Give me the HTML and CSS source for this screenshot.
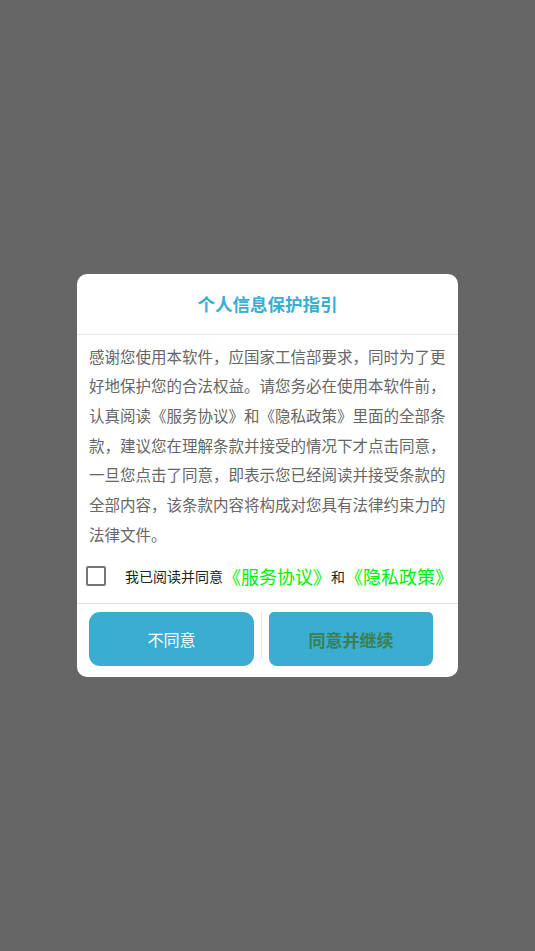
FILE: index.html
```html
<!DOCTYPE html>
<html lang="zh-CN">
<head>
<meta charset="utf-8">
<title>个人信息保护指引</title>
<link rel="stylesheet" href="styles.css">
</head>
<body>
<div class="overlay">
  <div class="dialog">
    <div class="title">个人信息保护指引</div>
    <div class="content">感谢您使用本软件，应国家工信部要求，同时为了更好地保护您的合法权益。请您务必在使用本软件前，认真阅读《服务协议》和《隐私政策》里面的全部条款，建议您在理解条款并接受的情况下才点击同意，一旦您点击了同意，即表示您已经阅读并接受条款的全部内容，该条款内容将构成对您具有法律约束力的法律文件。</div>
    <div class="agree">
      <span class="checkbox"></span>
      <span class="label">我已阅读并同意</span><span class="link">《服务协议》</span><span class="label">和</span><span class="link">《隐私政策》</span>
    </div>
    <div class="footer">
      <div class="btn btn-cancel">不同意</div>
      <div class="sep"></div>
      <div class="btn btn-ok">同意并继续</div>
    </div>
  </div>
</div>
</body>
</html>
```
FILE: styles.css
```css
html, body {
  margin: 0;
  padding: 0;
  height: 100%;
}
body {
  background: #666666;
  font-family: "Noto Sans CJK SC", "Noto Sans", sans-serif;
}
.overlay {
  height: 951px;
  display: flex;
  align-items: center;
  justify-content: center;
}
.dialog {
  width: 381px;
  background: #ffffff;
  border-radius: 10px;
  overflow: hidden;
}
.title {
  height: 60px;
  line-height: 60px;
  text-align: center;
  font-size: 17.5px;
  font-weight: bold;
  color: #3aadd2;
  border-bottom: 1px solid #e6e6e6;
}
.content {
  padding: 7px 10px 0 12px;
  font-size: 15.5px;
  line-height: 29.7px;
  color: #666666;
}
.agree {
  height: 54px;
  display: flex;
  align-items: center;
  padding-left: 9px;
  white-space: nowrap;
}
.checkbox {
  width: 16px;
  height: 16px;
  border: 2px solid #767676;
  border-radius: 2px;
  margin-right: 19px;
  flex: none;
}
.label {
  font-size: 14px;
  color: #222222;
}
.link {
  font-size: 18px;
  color: #00f000;
}
.footer {
  border-top: 1px solid #e3e3e3;
  display: flex;
  padding: 8px 0 11px 12px;
}
.btn {
  height: 54px;
  display: flex;
  align-items: center;
  justify-content: center;
  background: #3aadd1;
}
.btn-cancel {
  width: 165px;
  border-radius: 11px;
  color: #ffffff;
  font-size: 16px;
}
.sep {
  width: 1px;
  height: 46px;
  background: #e3e3e3;
  margin: 0 7px;
}
.btn-ok {
  width: 164px;
  border-radius: 5px 5px 8px 8px;
  color: #3b8050;
  font-size: 17px;
  font-weight: bold;
}
```
